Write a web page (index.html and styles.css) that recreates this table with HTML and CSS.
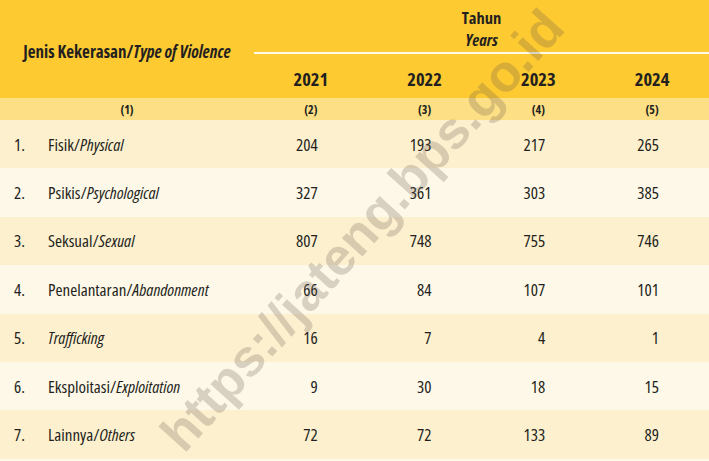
FILE: index.html
```html
<!DOCTYPE html>
<html>
<head>
<meta charset="utf-8">
<link rel="stylesheet" href="styles.css">
</head>
<body>
<div class="sheet">
  <table class="tbl">
    <colgroup>
      <col class="c-label">
      <col class="c-year">
      <col class="c-year">
      <col class="c-year">
      <col class="c-year">
    </colgroup>
    <thead>
      <tr class="h1">
        <th rowspan="2" class="lbl">Jenis Kekerasan/<i>Type of Violence</i></th>
        <th colspan="4" class="tahun">Tahun<br><i>Years</i></th>
      </tr>
      <tr class="h2">
        <th>2021</th><th>2022</th><th>2023</th><th>2024</th>
      </tr>
      <tr class="idx">
        <th>(1)</th><th>(2)</th><th>(3)</th><th>(4)</th><th>(5)</th>
      </tr>
    </thead>
    <tbody>
      <tr><td class="name"><span class="no">1.</span>Fisik/<i>Physical</i></td><td>204</td><td>193</td><td>217</td><td>265</td></tr>
      <tr><td class="name"><span class="no">2.</span>Psikis/<i>Psychological</i></td><td>327</td><td>361</td><td>303</td><td>385</td></tr>
      <tr><td class="name"><span class="no">3.</span>Seksual/<i>Sexual</i></td><td>807</td><td>748</td><td>755</td><td>746</td></tr>
      <tr><td class="name"><span class="no">4.</span>Penelantaran/<i>Abandonment</i></td><td>66</td><td>84</td><td>107</td><td>101</td></tr>
      <tr><td class="name"><span class="no">5.</span><i>Trafficking</i></td><td>16</td><td>7</td><td>4</td><td>1</td></tr>
      <tr><td class="name"><span class="no">6.</span>Eksploitasi/<i>Exploitation</i></td><td>9</td><td>30</td><td>18</td><td>15</td></tr>
      <tr><td class="name"><span class="no">7.</span>Lainnya/<i>Others</i></td><td>72</td><td>72</td><td>133</td><td>89</td></tr>
    </tbody>
  </table>
  <div class="wm">https://jateng.bps.go.id</div>
</div>
</body>
</html>
```
FILE: styles.css
```css
html, body {
  margin: 0;
  padding: 0;
  background: #fef8e8;
}
.sheet {
  position: relative;
  width: 709px;
  height: 461px;
  overflow: hidden;
  font-family: "Open Sans", "DejaVu Sans Condensed", sans-serif;
  font-stretch: 75%;
  color: #231f20;
}
.tbl {
  width: 709px;
  border-collapse: collapse;
  table-layout: fixed;
}
.c-label { width: 254px; }
.tbl th, .tbl td {
  padding: 0;
}
.tbl thead th {
  background: #fdca32;
  font-weight: bold;
}
.h1 { height: 53px; }
.h1 .lbl {
  font-size: 17px;
  text-align: center;
  vertical-align: middle;
  padding-top: 4px;
  white-space: nowrap;
}
.h1 .tahun {
  font-size: 16.5px;
  line-height: 22px;
  text-align: center;
  vertical-align: middle;
  padding-top: 5px;
  border-bottom: 2px solid #fffbe9;
}
.h2 { height: 45px; }
.h2 th {
  font-size: 18.5px;
  text-align: center;
  vertical-align: middle;
  padding-top: 5px;
}
.idx { height: 22px; }
.tbl thead .idx th {
  background: #fddf85;
  font-size: 12px;
  text-align: center;
  vertical-align: middle;
}
.tbl tbody tr { height: 48.4px; }
.tbl tbody tr:nth-child(odd) td { background: #fdf0cf; }
.tbl tbody tr:nth-child(even) td { background: #fef8e8; }
.tbl td {
  font-size: 17px;
  text-align: right;
  padding-right: 50px;
  vertical-align: middle;
}
.tbl td.name {
  text-align: left;
  padding-left: 14px;
  padding-right: 0;
}
.no {
  display: inline-block;
  width: 34px;
}
.wm {
  position: absolute;
  left: 362px;
  top: 230px;
  transform: translate(-50%, -50%) rotate(-48deg);
  font-family: "Liberation Sans", Arial, sans-serif;
  font-stretch: normal;
  font-weight: bold;
  font-size: 52px;
  line-height: 1;
  white-space: nowrap;
  color: rgba(95, 85, 70, 0.24);
  pointer-events: none;
}
```
